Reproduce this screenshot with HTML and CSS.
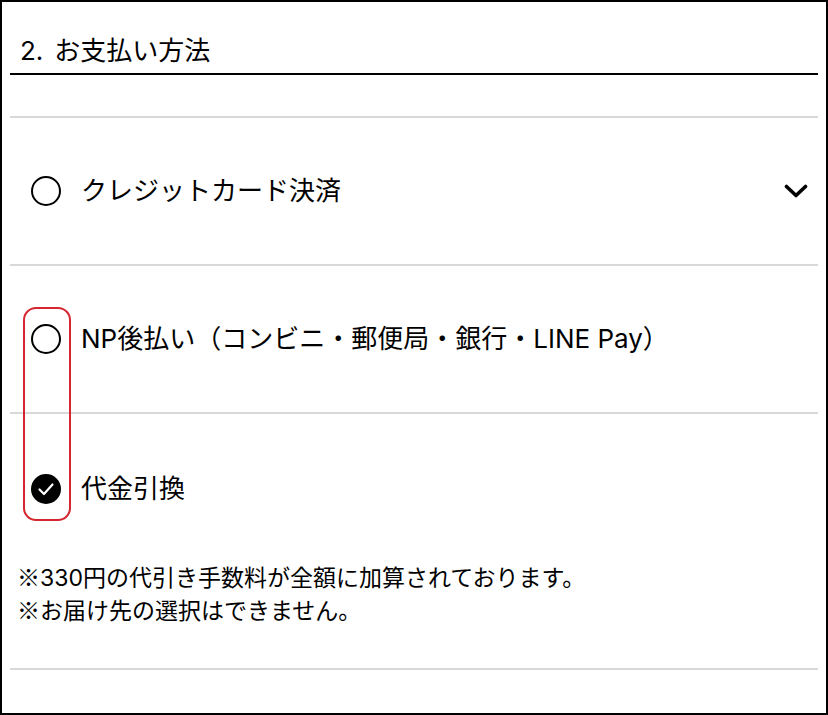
FILE: index.html
```html
<!DOCTYPE html>
<html lang="ja">
<head>
    <meta charset="UTF-8">
    <meta name="viewport" content="width=device-width, initial-scale=1.0">
    <title>お支払い方法</title>
    <link rel="stylesheet" href="styles.css">
</head>
<body>

<div class="frame">
    <div class="content">
        <h2 class="section-title"><span class="section-num">2.</span>お支払い方法</h2>

        <ul class="payment-list">
            <li class="payment-item">
                <div class="payment-row">
                    <span class="radio"></span>
                    <span class="payment-label">クレジットカード決済</span>
                    <svg class="chevron" width="24" height="16" viewBox="0 0 24 16">
                        <polyline points="2.5,3.5 12,12.5 21.5,3.5" fill="none" stroke="#000" stroke-width="3.6" stroke-linecap="round" stroke-linejoin="round"/>
                    </svg>
                </div>
            </li>
            <li class="payment-item">
                <div class="payment-row">
                    <span class="radio"></span>
                    <span class="payment-label">NP後払い（コンビニ・郵便局・銀行・LINE Pay）</span>
                </div>
            </li>
            <li class="payment-item is-selected">
                <div class="payment-row">
                    <svg class="radio-checked" width="30" height="30" viewBox="0 0 30 30">
                        <circle cx="15" cy="15" r="15" fill="#000"/>
                        <polyline points="8.5,15.5 13,20 21.5,10.5" fill="none" stroke="#fff" stroke-width="2.2" stroke-linecap="round" stroke-linejoin="round"/>
                    </svg>
                    <span class="payment-label">代金引換</span>
                </div>
                <div class="payment-note">
                    <p><span class="note-mark">※</span>330円の代引き手数料が全額に加算されております。</p>
                    <p><span class="note-mark">※</span>お届け先の選択はできません。</p>
                </div>
            </li>
        </ul>
    </div>

    <div class="highlight"></div>
</div>

</body>
</html>
```

FILE: styles.css
```css
body {
    margin: 0;
    padding: 0;
    background-color: #fff;
    font-family: Inter, "Noto Sans CJK JP", sans-serif;
    color: #000;
}
.frame {
    position: relative;
    width: 828px;
    height: 715px;
    box-sizing: border-box;
    border: 2px solid #000;
    overflow: hidden;
}
.content {
    padding: 0 8px;
}
.section-title {
    margin: 31px 0 0;
    padding: 0 0 4px 10px;
    font-size: 26px;
    font-weight: normal;
    line-height: 36px;
    border-bottom: 2px solid #000;
}
.section-num {
    margin-right: 11px;
}
.payment-list {
    list-style: none;
    margin: 41px 0 0;
    padding: 0;
    border-bottom: 2px solid #d9d9d9;
}
.payment-item {
    border-top: 2px solid #d9d9d9;
    padding: 55px 10px 55px 21px;
}
.payment-item.is-selected {
    padding-top: 57px;
    padding-bottom: 40px;
}
.payment-row {
    display: flex;
    align-items: center;
    gap: 20px;
    height: 36px;
}
.radio {
    width: 30px;
    height: 30px;
    box-sizing: border-box;
    border: 2px solid #000;
    border-radius: 50%;
    flex-shrink: 0;
}
.radio-checked {
    flex-shrink: 0;
    display: block;
}
.payment-label {
    font-size: 26px;
    line-height: 36px;
    white-space: nowrap;
}
.chevron {
    margin-left: auto;
    display: block;
}
.payment-note {
    margin: 55px 0 0 -14px;
    font-size: 23px;
    line-height: 33px;
}
.payment-note p {
    margin: 0;
    height: 33px;
}
.note-mark {
    font-family: "Noto Sans CJK JP", sans-serif;
    line-height: 1;
}
.highlight {
    position: absolute;
    left: 21px;
    top: 305px;
    width: 48px;
    height: 214px;
    box-sizing: border-box;
    border: 2.5px solid #d6262f;
    border-radius: 13px;
}
```
